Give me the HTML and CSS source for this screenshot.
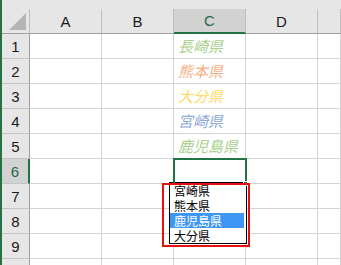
FILE: index.html
```html
<!DOCTYPE html>
<html lang="ja">
<head>
    <meta charset="UTF-8">
    <title>Sheet</title>
    <link rel="stylesheet" href="styles.css">
</head>
<body>
    <div class="window">
        <div class="strip"></div>
        <div class="sheet">
            <div class="topband"></div>
            <div class="grid">
                <div class="hd corner"></div>
                <div class="hd col">A</div>
                <div class="hd col">B</div>
                <div class="hd col active-col">C</div>
                <div class="hd col">D</div>
                <div class="hd col"></div>

                <div class="hd row">1</div><div class="cell"></div><div class="cell"></div><div class="cell val green">長崎県</div><div class="cell"></div><div class="cell"></div>
                <div class="hd row">2</div><div class="cell"></div><div class="cell"></div><div class="cell val orange">熊本県</div><div class="cell"></div><div class="cell"></div>
                <div class="hd row">3</div><div class="cell"></div><div class="cell"></div><div class="cell val yellow">大分県</div><div class="cell"></div><div class="cell"></div>
                <div class="hd row">4</div><div class="cell"></div><div class="cell"></div><div class="cell val blue">宮崎県</div><div class="cell"></div><div class="cell"></div>
                <div class="hd row">5</div><div class="cell"></div><div class="cell"></div><div class="cell val green">鹿児島県</div><div class="cell"></div><div class="cell"></div>
                <div class="hd row active-row">6</div><div class="cell"></div><div class="cell"></div><div class="cell"></div><div class="cell"></div><div class="cell"></div>
                <div class="hd row">7</div><div class="cell"></div><div class="cell"></div><div class="cell"></div><div class="cell"></div><div class="cell"></div>
                <div class="hd row">8</div><div class="cell"></div><div class="cell"></div><div class="cell"></div><div class="cell"></div><div class="cell"></div>
                <div class="hd row">9</div><div class="cell"></div><div class="cell"></div><div class="cell"></div><div class="cell"></div><div class="cell"></div>
                <div class="hd row"></div><div class="cell"></div><div class="cell"></div><div class="cell"></div><div class="cell"></div><div class="cell"></div>
            </div>
        </div>

        <!-- dropdown list -->
        <ul class="dropdown">
            <li>宮崎県</li>
            <li>熊本県</li>
            <li class="hl">鹿児島県</li>
            <li>大分県</li>
        </ul>

        <!-- selected cell C6 -->
        <div class="selection"><span class="handle"></span></div>
        <div class="mark"></div>
    </div>
</body>
</html>
```

FILE: styles.css
```css
* {
    margin: 0;
    padding: 0;
    box-sizing: border-box;
}

body {
    background: #fff;
    font-family: "Liberation Sans", "Noto Sans CJK JP", sans-serif;
    overflow: hidden;
}

.window {
    position: relative;
    display: flex;
    width: 341px;
    height: 265px;
    overflow: hidden;
}

.strip {
    width: 2px;
    background: #217346;
}

.sheet {
    flex: 1;
}

.topband {
    height: 9px;
    background: #e6e6e6;
}

/* Grid */
.grid {
    display: grid;
    grid-template-columns: 28px 72px 72px 72px 72px 1fr;
    grid-auto-rows: 25px;
}

.cell {
    border-right: 1px solid #d4d4d4;
    border-bottom: 1px solid #d4d4d4;
}

.val {
    font-family: "Noto Sans CJK JP", sans-serif;
    font-style: italic;
    font-size: 15px;
    line-height: 24px;
    padding-left: 4px;
    white-space: nowrap;
}

.green { color: #a9d08e; }
.orange { color: #f4b084; }
.yellow { color: #ffd966; }
.blue { color: #8ea9db; }

/* Headers */
.hd {
    background: #e6e6e6;
    color: #1a1a1a;
    font-size: 15px;
    display: flex;
    align-items: center;
    justify-content: center;
}

.col {
    border-right: 1px solid #bebebe;
    border-bottom: 1px solid #9f9f9f;
}

.row {
    border-right: 1px solid #9f9f9f;
    border-bottom: 1px solid #c4c4c4;
}

.corner {
    position: relative;
    border-right: 1px solid #bebebe;
    border-bottom: 1px solid #9f9f9f;
}

.corner::after {
    content: "";
    position: absolute;
    right: 3px;
    bottom: 3px;
    width: 17px;
    height: 17px;
    background: #b5b5b5;
    clip-path: polygon(100% 0, 100% 100%, 0 100%);
}

.active-col {
    background: #d2d2d2;
    color: #1e6b45;
    border-bottom: 2px solid #217346;
}

.active-row {
    background: #d2d2d2;
    color: #1e6b45;
    border-right: 2px solid #217346;
}

/* Selected cell */
.selection {
    position: absolute;
    left: 173px;
    top: 158px;
    width: 74px;
    height: 25px;
    border: 2px solid #217346;
    border-bottom: none;
}

.handle {
    position: absolute;
    right: -3px;
    bottom: -3px;
    width: 5px;
    height: 5px;
    background: #217346;
    border: 1px solid #fff;
}

/* Dropdown list */
.dropdown {
    position: absolute;
    left: 169px;
    top: 182px;
    width: 78px;
    padding-right: 2px;
    list-style: none;
    background: #fff;
    border: 1px solid #000;
    font-family: "Noto Sans CJK JP", sans-serif;
    font-size: 12px;
}

.dropdown li {
    height: 15px;
    line-height: 15px;
    padding-left: 4px;
    color: #000;
    overflow: hidden;
}

.dropdown li.hl {
    background: #3f97f5;
    color: #fff;
}

.mark {
    position: absolute;
    left: 162px;
    top: 183px;
    width: 88px;
    height: 64px;
    border: 2px solid #e8100f;
}
```
